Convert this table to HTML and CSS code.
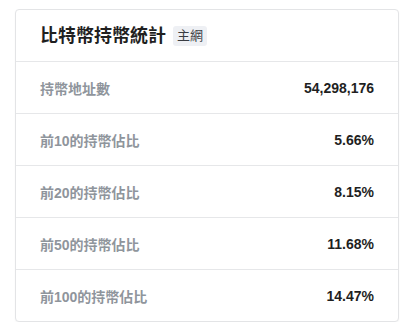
FILE: index.html
```html
<!DOCTYPE html>
<html lang="zh-Hant">
<head>
<meta charset="utf-8">
<link rel="stylesheet" href="styles.css">
</head>
<body>
<div class="page">
  <div class="card">
    <div class="card-header">
      <h2 class="title">比特幣持幣統計</h2>
      <span class="badge">主網</span>
    </div>
    <div class="row"><span class="label">持幣地址數</span><span class="value">54,298,176</span></div>
    <div class="row"><span class="label">前10的持幣佔比</span><span class="value">5.66%</span></div>
    <div class="row"><span class="label">前20的持幣佔比</span><span class="value">8.15%</span></div>
    <div class="row"><span class="label">前50的持幣佔比</span><span class="value">11.68%</span></div>
    <div class="row"><span class="label">前100的持幣佔比</span><span class="value">14.47%</span></div>
  </div>
</div>
</body>
</html>
```
FILE: styles.css
```css
html, body {
  margin: 0;
  padding: 0;
  background: #ffffff;
}
body {
  font-family: "Liberation Sans", "Noto Sans CJK TC", Arial, sans-serif;
  color: #222;
}
.page {
  padding: 9px 14px 0 15px;
}
.card {
  width: 382px;
  border: 1px solid #e3e4e6;
  border-radius: 4px;
  box-shadow: 0 1px 2px rgba(0,0,0,0.04);
  background: #fff;
}
.card-header {
  height: 51px;
  display: flex;
  align-items: center;
  gap: 7px;
  padding: 0 24px;
  border-bottom: 1px solid #e6e7e9;
}
.title {
  margin: 0;
  font-size: 18px;
  font-weight: 700;
  color: #1f1f1f;
  line-height: 1;
}
.badge {
  background: #eef0f4;
  color: #3a3d42;
  font-size: 13px;
  padding: 2px 4px;
  border-radius: 3px;
  line-height: 16px;
}
.row {
  height: 51px;
  display: flex;
  align-items: center;
  justify-content: space-between;
  padding: 0 24px;
  border-bottom: 1px solid #e6e7e9;
}
.row:last-child {
  border-bottom: none;
}
.label {
  font-size: 14px;
  font-weight: 700;
  color: #8f959c;
}
.value {
  font-size: 14px;
  font-weight: 700;
  color: #1f1f1f;
}
```
